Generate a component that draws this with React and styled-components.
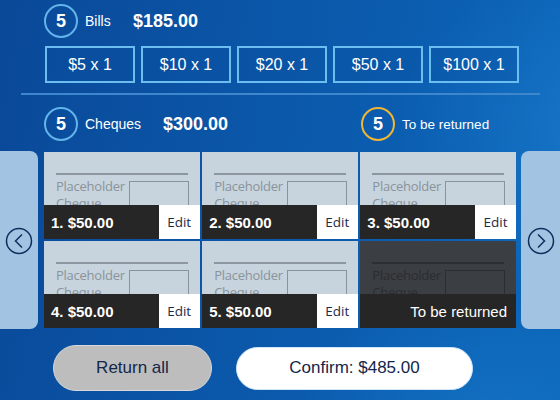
import React from 'react';
import styled, { createGlobalStyle } from 'styled-components';

const GlobalStyle = createGlobalStyle`
  html, body { margin: 0; padding: 0; }
  body { font-family: "Liberation Sans", Arial, sans-serif; }
`;

const Screen = styled.div`
  position: relative;
  width: 560px;
  height: 400px;
  overflow: hidden;
  color: #fff;
  background:
    radial-gradient(ellipse 320px 260px at 620px 130px, rgba(40, 140, 220, 0.45), rgba(40, 140, 220, 0) 70%),
    radial-gradient(ellipse 260px 200px at 480px 420px, rgba(30, 130, 210, 0.4), rgba(30, 130, 210, 0) 70%),
    linear-gradient(100deg, #0a4898 0%, #0b57a9 45%, #0b66ba 100%);
`;

const SummaryRow = styled.div`
  display: flex;
  align-items: center;
  height: 42px;
  padding-left: 44px;
  padding-top: ${(p) => p.$top || 0}px;
`;

const Count = styled.div`
  box-sizing: border-box;
  width: 34px;
  height: 34px;
  border-radius: 50%;
  border: 2px solid ${(p) => (p.$warn ? '#f2b632' : '#62b4ea')};
  display: flex;
  align-items: center;
  justify-content: center;
  font-size: 18px;
  font-weight: bold;
  flex-shrink: 0;
`;

const Label = styled.span`
  font-size: ${(p) => p.$size || 14}px;
  margin-left: 7px;
  width: ${(p) => p.$w}px;
`;

const Amount = styled.span`
  font-size: 18px;
  font-weight: bold;
`;

const Spacer = styled.div`
  flex: 1;
  max-width: ${(p) => p.$w}px;
`;

const Bills = styled.div`
  display: flex;
  gap: 6px;
  padding: 4px 0 0 45px;
`;

const BillButton = styled.button`
  box-sizing: border-box;
  width: 90px;
  height: 37px;
  border: 2px solid #6cbdf0;
  background: rgba(8, 80, 160, 0.35);
  color: #fff;
  font-family: "Liberation Sans", Arial, sans-serif;
  font-size: 16px;
  padding: 0;
`;

const Divider = styled.hr`
  margin: 10px 20px 0 21px;
  border: none;
  height: 2px;
  background: #3f87cc;
`;

const Carousel = styled.div`
  display: grid;
  grid-template-columns: 38px 1fr 38px;
  column-gap: 6px;
  margin-top: 6px;
  height: 178px;
`;

const NavPanel = styled.div`
  background: #a3c3e2;
  border-radius: ${(p) => (p.$right ? '8px 0 0 8px' : '0 8px 8px 0')};
  display: flex;
  align-items: center;
  justify-content: center;
  margin-left: ${(p) => (p.$right ? '-1px' : 0)};
`;

const NavCircle = styled.svg`
  width: 28px;
  height: 28px;
  margin-top: 1px;
`;

const Grid = styled.div`
  display: grid;
  grid-template-columns: repeat(3, 1fr);
  grid-template-rows: 87px 87px;
  gap: 2px 2.5px;
  padding-top: 1px;
`;

const Card = styled.div`
  display: flex;
  flex-direction: column;
  overflow: hidden;
  background: ${(p) => (p.$returned ? '#3b3e42' : '#c7d4de')};
`;

const ChequeImage = styled.div`
  position: relative;
  flex: 1;
  overflow: hidden;
`;

const ChequeLine = styled.div`
  position: absolute;
  left: 12px;
  right: 12px;
  top: 21px;
  height: 2px;
  background: ${(p) => (p.$returned ? '#2c2f33' : '#8e979f')};
`;

const ChequeText = styled.div`
  position: absolute;
  left: 12px;
  top: 26px;
  font-family: "Open Sans", "Noto Sans", sans-serif;
  font-size: 13px;
  letter-spacing: -0.25px;
  line-height: 17px;
  color: ${(p) => (p.$returned ? '#2a2d31' : '#8a939b')};
`;

const ChequeBox = styled.div`
  position: absolute;
  left: 85px;
  right: 11px;
  top: 29px;
  height: 40px;
  border: 1px solid ${(p) => (p.$returned ? '#2a2d31' : '#8a939b')};
`;

const CardBar = styled.div`
  height: 34px;
  flex-shrink: 0;
  background: #262626;
  display: flex;
  align-items: center;
  justify-content: ${(p) => (p.$returned ? 'flex-end' : 'space-between')};
`;

const CardAmount = styled.span`
  padding-left: 7px;
  font-size: 15px;
  font-weight: bold;
  color: #fff;
`;

const ReturnedText = styled.span`
  padding-right: 9px;
  font-size: 15px;
  color: #fff;
`;

const EditButton = styled.button`
  width: 41px;
  height: 34px;
  border: none;
  padding: 0;
  background: #fff;
  color: #1c2b4b;
  font-family: "Open Sans", "Noto Sans", sans-serif;
  font-size: 13.5px;
`;

const Actions = styled.div`
  display: flex;
  align-items: center;
  padding: 16px 0 0 53px;
  gap: 24px;
`;

const ActionButton = styled.button`
  box-sizing: border-box;
  width: ${(p) => p.$w}px;
  height: ${(p) => p.$h}px;
  border-radius: 23px;
  border: 1px solid ${(p) => (p.$primary ? '#cfe6fa' : '#d8d8d8')};
  background: ${(p) => (p.$primary ? '#fff' : '#bdbdbd')};
  color: #14264a;
  font-family: "Liberation Sans", Arial, sans-serif;
  font-size: 17px;
  padding: 0;
`;

const cheques = [1, 2, 3, 4, 5];

const Chevron = ({ right }) => (
  <NavCircle viewBox="0 0 28 28">
    <circle cx="14" cy="14" r="12.5" fill="none" stroke="#0f2e5c" strokeWidth="1.5" />
    <path
      d={right ? 'M11 7.5 L17.5 14 L11 20.5' : 'M17 7.5 L10.5 14 L17 20.5'}
      fill="none"
      stroke="#0f2e5c"
      strokeWidth="1.5"
    />
  </NavCircle>
);

const Cheque = ({ n, returned }) => (
  <Card $returned={returned}>
    <ChequeImage>
      <ChequeLine $returned={returned} />
      <ChequeText $returned={returned}>
        Placeholder
        <br />
        Cheque
      </ChequeText>
      <ChequeBox $returned={returned} />
    </ChequeImage>
    <CardBar $returned={returned}>
      {returned ? (
        <ReturnedText>To be returned</ReturnedText>
      ) : (
        <>
          <CardAmount>{n}. $50.00</CardAmount>
          <EditButton>Edit</EditButton>
        </>
      )}
    </CardBar>
  </Card>
);

export default function App() {
  return (
    <Screen>
      <GlobalStyle />
      <SummaryRow>
        <Count>5</Count>
        <Label $w={48}>Bills</Label>
        <Amount>$185.00</Amount>
      </SummaryRow>
      <Bills>
        {['$5 x 1', '$10 x 1', '$20 x 1', '$50 x 1', '$100 x 1'].map((b) => (
          <BillButton key={b}>{b}</BillButton>
        ))}
      </Bills>
      <Divider />
      <SummaryRow $top={8}>
        <Count>5</Count>
        <Label $w={78}>Cheques</Label>
        <Amount>$300.00</Amount>
        <Spacer $w={133} />
        <Count $warn>5</Count>
        <Label $size={13.5}>To be returned</Label>
      </SummaryRow>
      <Carousel>
        <NavPanel>
          <Chevron />
        </NavPanel>
        <Grid>
          {cheques.map((n) => (
            <Cheque key={n} n={n} />
          ))}
          <Cheque returned />
        </Grid>
        <NavPanel $right>
          <Chevron right />
        </NavPanel>
      </Carousel>
      <Actions>
        <ActionButton $w={159} $h={46}>Return all</ActionButton>
        <ActionButton $primary $w={237} $h={43}>Confirm: $485.00</ActionButton>
      </Actions>
    </Screen>
  );
}
